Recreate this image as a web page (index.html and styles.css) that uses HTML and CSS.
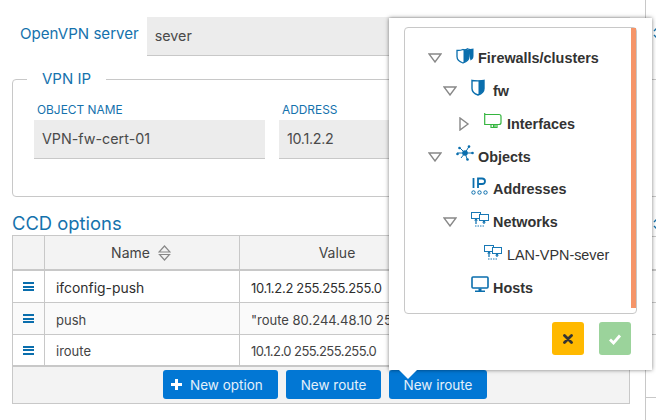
FILE: index.html
```html
<!DOCTYPE html>
<html lang="en">
<head>
    <meta charset="UTF-8">
    <title>CCD options</title>
    <link rel="stylesheet" href="styles.css">
</head>
<body>
<div class="page">
    <div class="server-row">
        <label class="server-label">OpenVPN server</label>
        <div class="field server-field">sever</div>
    </div>

    <fieldset class="vpn-ip">
        <legend>VPN IP</legend>
        <div class="vpn-cols">
            <div class="vpn-col name-col">
                <label>OBJECT NAME</label>
                <div class="field">VPN-fw-cert-01</div>
            </div>
            <div class="vpn-col addr-col">
                <label>ADDRESS</label>
                <div class="field tight-a">10.1.2.2</div>
            </div>
        </div>
    </fieldset>

    <h3 class="ccd-title">CCD options</h3>
    <div class="ccd">
        <div class="ccd-row ccd-head">
            <div class="c-drag"></div>
            <div class="c-name">Name
                <svg class="sort" width="13" height="16" viewBox="0 0 13 16"><path d="M6.5 1 12 7H1zM1.5 9.5h10L6.5 15z" fill="none" stroke="#888" stroke-width="1.2"/></svg>
            </div>
            <div class="c-value">Value</div>
            <div></div>
        </div>
        <div class="ccd-row body-row">
            <div class="c-drag"><span class="bars"></span></div>
            <div class="c-name dark">ifconfig-push</div>
            <div class="c-value dark tight-a">10.1.2.2 255.255.255.0</div>
            <div></div>
        </div>
        <div class="ccd-row body-row alt">
            <div class="c-drag"><span class="bars"></span></div>
            <div class="c-name">push</div>
            <div class="c-value">"route 80.244.48.10 255.255.255.255"</div>
            <div></div>
        </div>
        <div class="ccd-row body-row last">
            <div class="c-drag"><span class="bars"></span></div>
            <div class="c-name">iroute</div>
            <div class="c-value tight-b">10.1.2.0 255.255.255.0</div>
            <div></div>
        </div>
        <div class="ccd-foot">
            <button class="btn btn-option"><span class="plus"></span>New option</button>
            <button class="btn btn-route">New route</button>
            <button class="btn btn-iroute">New iroute</button>
        </div>
    </div>
</div>

<div class="side-col">
    <div class="side-top">
        <svg width="11" height="12" viewBox="0 0 11 12"><use href="#chev"/></svg>
    </div>
    <div class="side-mid"></div>
    <div class="side-label">
        <svg width="11" height="12" viewBox="0 0 11 12"><use href="#chev"/></svg>
    </div>
    <div class="side-head"></div>
    <div class="side-row"></div>
    <div class="side-row"></div>
    <div class="side-foot"></div>
</div>

<div class="popup">
    <div class="tree-box">
        <div class="scrollbar"></div>
        <ul class="tree">
            <li class="lvl0 bold">
                <svg class="tw" width="14" height="10" viewBox="0 0 14 10"><path d="M1 1h12L7 9z" fill="none" stroke="#888" stroke-width="1.4"/></svg>
                <span class="ico"><svg width="18" height="17" viewBox="0 0 18 17"><path d="M12 1.500c1.500.5 3.500.5 5.500 0v7.500c0 2.500-1.500 3.800-3 4.500" fill="#0a6ead"/><path d="M7 2.500c1.500.5 3.500.5 5-1" fill="none" stroke="#0a6ead" stroke-width="1.200"/><path d="M1 3.500c3 0 5-.5 6-1 1 .5 3 1 6 1v6c0 3-3 5.500-6 6.500-3-1-6-3.500-6-6.500z" fill="#fff" stroke="#0a6ead" stroke-width="1.300"/><path d="M7.500 2.800c1.200.4 3 .7 5.500.7v6c0 3-3 5.200-5.500 6.200z" fill="#0a6ead"/></svg></span>
                <span>Firewalls/clusters</span>
            </li>
            <li class="lvl1 bold">
                <svg class="tw" width="14" height="10" viewBox="0 0 14 10"><path d="M1 1h12L7 9z" fill="none" stroke="#888" stroke-width="1.4"/></svg>
                <span class="ico"><svg width="14" height="17" viewBox="0 0 14 17"><path d="M1 1.500c2 .5 10 .5 12 0v8c0 3-3 5.500-6 6.500-3-1-6-3.500-6-6.500z" fill="#fff" stroke="#0a6ead" stroke-width="1.400"/><path d="M7.500 1.800c2 0 4.500 0 5.500-.3v8c0 3-2.500 5.200-5.500 6.200z" fill="#0a6ead"/></svg></span>
                <span>fw</span>
            </li>
            <li class="lvl2 bold">
                <svg class="tw" width="14" height="14" viewBox="0 0 14 14"><path d="M2 1v12l8-6z" fill="none" stroke="#888" stroke-width="1.400"/></svg>
                <span class="ico"><svg width="18" height="15" viewBox="0 0 18 15"><path d="M.7 0v12M.7 1.500H15q2 0 2 2v6q0 2-2 2H.7M7 11.500v3h6v-3M9.500 12v2M11 12v2" fill="none" stroke="#35b53f" stroke-width="1.200"/></svg></span>
                <span>Interfaces</span>
            </li>
            <li class="lvl0 bold">
                <svg class="tw" width="14" height="10" viewBox="0 0 14 10"><path d="M1 1h12L7 9z" fill="none" stroke="#888" stroke-width="1.4"/></svg>
                <span class="ico"><svg width="18" height="17" viewBox="0 0 18 17"><path d="M9 8 3.500 2.500M9 8l4-6.500M9 8H1M9 8h8M9 8l-4 5M9 8l2.500 7" stroke="#0a6ead" stroke-width="1"/><circle cx="9" cy="8" r="2.800" fill="#0a6ead"/><circle cx="3.500" cy="3" r="1.300" fill="#0a6ead"/><circle cx="13" cy="1.600" r="1.300" fill="#0a6ead"/><circle cx="1.500" cy="9" r="1.300" fill="#0a6ead"/><circle cx="16.500" cy="8" r="1.300" fill="#0a6ead"/><circle cx="11.500" cy="14.500" r="1.300" fill="#0a6ead"/></svg></span>
                <span>Objects</span>
            </li>
            <li class="lvl1 bold no-tw">
                <span class="ico"><svg width="17" height="18" viewBox="0 0 17 18"><path d="M2.500 1v10" stroke="#0a6ead" stroke-width="1.800"/><path d="M7 11V1.500h4c4 0 4 5.500 0 5.500H7" fill="none" stroke="#0a6ead" stroke-width="1.800"/><circle cx="2.500" cy="15.500" r="1.700" fill="none" stroke="#0a6ead"/><circle cx="8.500" cy="15.500" r="1.700" fill="none" stroke="#0a6ead"/><circle cx="14.500" cy="15.500" r="1.700" fill="none" stroke="#0a6ead"/></svg></span>
                <span>Addresses</span>
            </li>
            <li class="lvl1 bold">
                <svg class="tw" width="14" height="10" viewBox="0 0 14 10"><path d="M1 1h12L7 9z" fill="none" stroke="#888" stroke-width="1.4"/></svg>
                <span class="ico"><svg width="18" height="15" viewBox="0 0 18 15"><use href="#net"/></svg></span>
                <span>Networks</span>
            </li>
            <li class="lvl2 no-tw">
                <span class="ico"><svg width="18" height="15" viewBox="0 0 18 15"><use href="#net"/></svg></span>
                <span>LAN-VPN-sever</span>
            </li>
            <li class="lvl1 bold no-tw">
                <span class="ico"><svg width="18" height="17" viewBox="0 0 18 17"><rect x="1" y="1" width="16" height="11" rx="1" fill="#fff" stroke="#0a6ead" stroke-width="1.600"/><path d="M7.500 12.500h3v2h-3zM4 14.500h10V16H4z" fill="#0a6ead"/></svg></span>
                <span>Hosts</span>
            </li>
        </ul>
    </div>
    <div class="popup-btns">
        <button class="square cancel">
            <svg width="10" height="10" viewBox="0 0 10 10"><path d="M1.500 1.500l7 7M8.500 1.500l-7 7" stroke="#333" stroke-width="2.800" stroke-linecap="round"/></svg>
        </button>
        <button class="square ok">
            <svg width="14" height="12" viewBox="0 0 14 12"><path d="M2 6.500 5.500 10 12 2.500" fill="none" stroke="#fff" stroke-width="2.800"/></svg>
        </button>
    </div>
    <div class="arrow"></div>
</div>

<svg class="defs" width="0" height="0">
    <defs>
        <g id="net" fill="none" stroke="#1878b5" stroke-width="1">
            <rect x=".5" y=".5" width="9" height="6" fill="#fff"/>
            <rect x="8.500" y="2.500" width="9" height="6" fill="#fff"/>
            <path d="M5 7v5M13 9v3" stroke-width="1.300"/>
            <path d="M3 8.500h4L5 6.500zM11 10.500h4l-2-2z" fill="#0a6ead" stroke="none"/>
            <path d="M4 14h9" stroke-dasharray="1.500 1"/>
        </g>
        <path id="chev" d="M4 1 1 4M1 8l3 3" fill="none" stroke="#1572ad" stroke-width="1.400"/>
    </defs>
</svg>
</body>
</html>
```

FILE: styles.css
```css
* {
    box-sizing: border-box;
}

html, body {
    height: 420px;
    overflow: hidden;
}

body {
    margin: 0;
    background: #fff;
    font-family: "Inter", "Open Sans", sans-serif;
    color: #444;
    position: relative;
}

.page {
    width: 630px;
    padding: 17px 0 0 12px;
}

.server-row {
    display: flex;
    align-items: flex-start;
    padding-left: 8px;
    gap: 8px;
}

.server-label {
    color: #1572ad;
    font-size: 15.1px;
    line-height: 34px;
    white-space: nowrap;
}

.field {
    background: #ececec;
    border-bottom: 1px solid #c8c8c8;
    height: 39px;
    line-height: 37px;
    padding: 0 8px;
    font-size: 14.3px;
    color: #4a4a4a;
}

.server-field {
    flex: 1;
}

.vpn-ip {
    margin: 14px 0 0;
    padding: 0 21px;
    height: 127px;
    border: 1px solid #c8c8c8;
    border-radius: 4px;
}

.vpn-ip legend {
    color: #1572ad;
    font-size: 15px;
    padding: 0 15px;
    margin-left: -7px;
    line-height: 18px;
}

.vpn-cols {
    display: flex;
    gap: 14px;
    margin-top: 15px;
}

.vpn-col label {
    display: block;
    color: #1572ad;
    font-size: 11.9px;
    line-height: 14px;
    padding-left: 3px;
    margin-bottom: 3px;
}

.name-col {
    width: 231px;
}

.addr-col {
    flex: 1;
}

.ccd-title {
    margin: 16px 0 0;
    font-weight: 400;
    font-size: 18.4px;
    line-height: 20px;
    color: #1572ad;
}

.ccd {
    border: 1px solid #c8c8c8;
    margin-top: 2px;
    width: 618px;
    font-size: 13px;
}

.ccd-row {
    display: grid;
    grid-template-columns: 32px 195px 195px 1fr;
    height: 32px;
    border-bottom: 1px solid #c8c8c8;
    background: #fff;
}

.ccd-row.alt {
    background: #fafafa;
}

.ccd-row.last {
    border-bottom-width: 2px;
}

.ccd-head {
    height: 35px;
    background: #f3f3f3;
    border-bottom-width: 2px;
    font-size: 14px;
}

.ccd-row > div {
    display: flex;
    align-items: center;
    border-right: 1px solid #c8c8c8;
    white-space: nowrap;
}

.ccd-row > div:last-child {
    border-right: none;
}

.body-row .c-name, .body-row .c-value {
    padding-top: 2px;
}

.ccd-head .c-name, .ccd-head .c-value {
    justify-content: center;
}

.ccd-head .c-name {
    gap: 8px;
    padding-right: 2px;
}

.ccd-row > .c-drag {
    justify-content: center;
}

.ccd-row .c-name, .ccd-row .c-value {
    padding-left: 11px;
}

.ccd-row.ccd-head .c-name, .ccd-row.ccd-head .c-value {
    padding-left: 0;
}

.dark {
    color: #2e2e2e;
}

.c-name.dark {
    font-size: 13.9px;
}

.tight-a {
    letter-spacing: -0.3px;
}

.tight-b {
    letter-spacing: -0.55px;
}

.bars {
    display: block;
    width: 11px;
    height: 9px;
    border-top: 2px solid #0a6ead;
    border-bottom: 2px solid #0a6ead;
}

.bars::after {
    content: "";
    display: block;
    height: 2px;
    margin-top: 1.5px;
    background: #0a6ead;
}

.ccd-foot {
    display: flex;
    gap: 8px;
    height: 36px;
    padding: 3px 0 0 150px;
    background: #f3f3f3;
}

.btn {
    height: 29px;
    padding: 0;
    border: none;
    border-radius: 3px;
    background: #0277d4;
    color: #e4f0fa;
    font: 13.5px "Inter", sans-serif;
    display: flex;
    align-items: center;
    justify-content: center;
}

.btn-option {
    width: 115px;
    justify-content: flex-start;
    padding-left: 8px;
}

.btn-route {
    width: 95px;
}

.btn-iroute {
    width: 98px;
}

.plus {
    display: inline-block;
    width: 11px;
    height: 11px;
    margin-right: 8px;
    background:
        linear-gradient(#fff, #fff) center / 11px 3px no-repeat,
        linear-gradient(#fff, #fff) center / 3px 11px no-repeat;
}

/* part of the next column, mostly under the popup */
.side-col {
    position: absolute;
    left: 645px;
    top: 0;
    width: 11px;
    height: 420px;
    border-left: 1px solid #c8c8c8;
}

.side-col svg {
    display: block;
    margin-left: 7px;
}

.side-col > div {
    border-bottom: 1px solid #c8c8c8;
}

.side-top {
    height: 80px;
    padding-top: 27px;
}

.side-mid {
    height: 117px;
}

.side-label {
    height: 40px;
    padding-top: 21px;
}

.side-head {
    height: 34px;
    border-bottom-width: 2px !important;
}

.side-row {
    height: 32px;
}

.side-foot {
    height: 63px;
}

/* popup over the table */
.popup {
    position: absolute;
    left: 389px;
    top: 18px;
    width: 263px;
    height: 352px;
    background: #fff;
    box-shadow: 0 0 4px rgba(0, 0, 0, 0.5);
}

.popup .arrow {
    position: absolute;
    left: 10px;
    bottom: -9px;
    width: 0;
    height: 0;
    border-left: 9px solid transparent;
    border-right: 9px solid transparent;
    border-top: 9px solid #fff;
}

.tree-box {
    position: relative;
    margin: 9px 0 0 15px;
    width: 233px;
    height: 287px;
    border: 1px solid #c8c8c8;
    border-radius: 4px;
}

.scrollbar {
    position: absolute;
    right: 0;
    top: 0;
    width: 5px;
    height: 280px;
    background: #f59569;
}

.tree {
    list-style: none;
    margin: 0;
    padding: 13.6px 0 0;
    font-family: "Liberation Sans", sans-serif;
    font-size: 14.4px;
    color: #333;
}

.tree li {
    display: flex;
    align-items: center;
    height: 32.85px;
    white-space: nowrap;
}

.tree .bold {
    font-weight: 700;
}

.lvl0 { padding-left: 23px; }
.lvl1 { padding-left: 38px; }
.lvl2 { padding-left: 53px; }

.tw {
    flex: none;
    margin-right: 14px;
}

.lvl2 .tw {
    margin-right: 12px;
}

.no-tw {
    margin-left: 28px;
}

.lvl2.no-tw {
    margin-left: 26px;
}

.ico {
    flex: none;
    width: 22px;
    display: flex;
    margin-top: -6px;
}

.lvl2 .ico {
    width: 23px;
}

.popup-btns {
    display: flex;
    justify-content: flex-end;
    gap: 15px;
    padding: 8px 21px 0 0;
}

.square {
    width: 32px;
    height: 33px;
    padding: 0;
    border: none;
    border-radius: 3px;
    display: flex;
    align-items: center;
    justify-content: center;
}

.cancel {
    background: #ffb900;
}

.ok {
    background: #9bd39b;
}

.defs {
    position: absolute;
}
```
